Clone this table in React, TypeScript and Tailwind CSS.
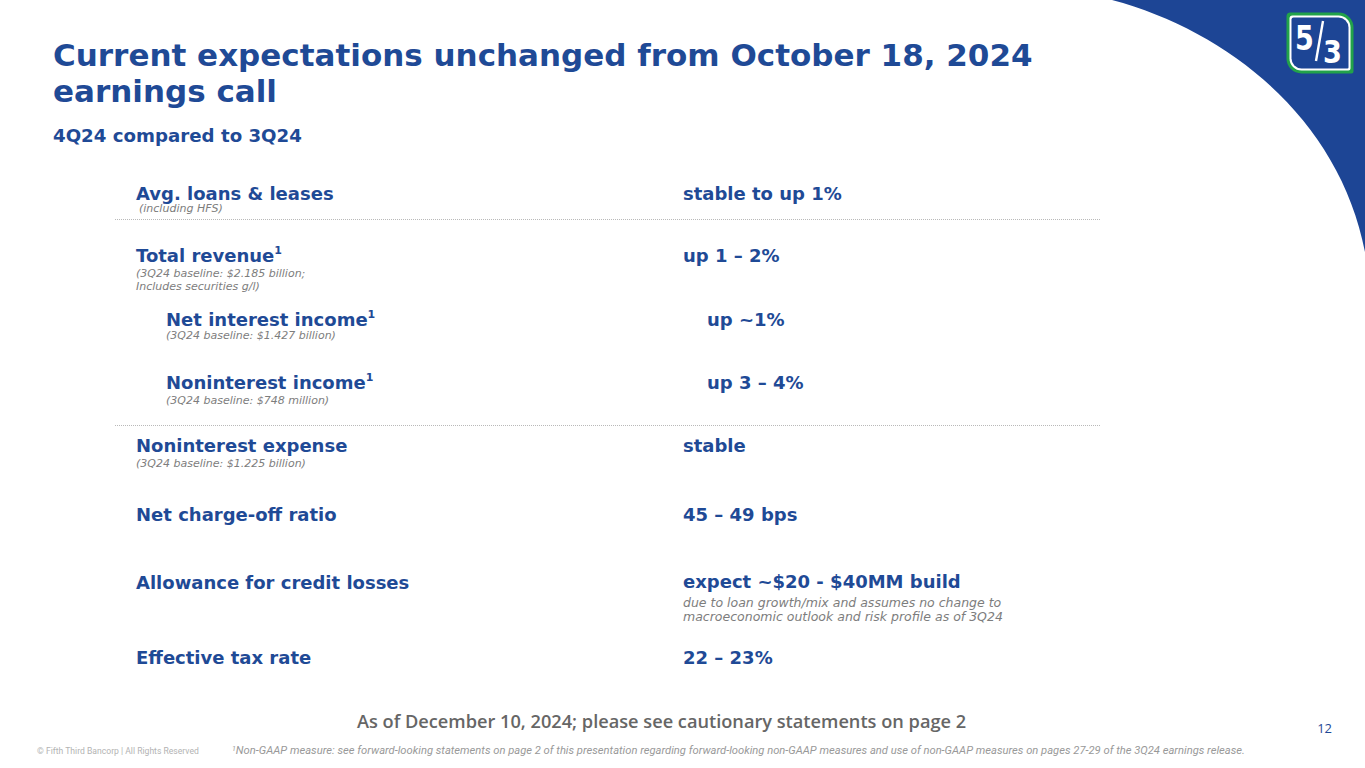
import React from "react";

const dv = "font-['DejaVu_Sans',sans-serif]";
const os = "font-['Open_Sans',sans-serif]";
const rb = "font-['Roboto',sans-serif]";

function Sup() {
  return <sup className="relative top-[-1px] text-[11px] align-super leading-none">1</sup>;
}

function Sub({ children, className = "" }: { children: React.ReactNode; className?: string }) {
  return (
    <div className={`${dv} font-normal italic text-[11px] leading-[13px] text-[#7d7d7d] ${className}`}>
      {children}
    </div>
  );
}

// rounded rect with separate corner radii
function rr(x: number, y: number, w: number, h: number, tl: number, tr: number, br: number, bl: number) {
  return `M${x + tl} ${y} H${x + w - tr} A${tr} ${tr} 0 0 1 ${x + w} ${y + tr} V${y + h - br} A${br} ${br} 0 0 1 ${
    x + w - br
  } ${y + h} H${x + bl} A${bl} ${bl} 0 0 1 ${x} ${y + h - bl} V${y + tl} A${tl} ${tl} 0 0 1 ${x + tl} ${y} Z`;
}

function Logo() {
  return (
    <svg width="68" height="62" viewBox="0 0 68 62" className="absolute left-[1286px] top-[12px]">
      <path d={rr(0.5, 0.5, 67, 61, 4, 15, 2, 15)} fill="#22a24a" />
      <path d={rr(3.5, 3.5, 61, 55, 3, 12, 2, 12)} fill="#ffffff" />
      <path d={rr(5.5, 5.5, 57, 51, 2, 10, 1, 10)} fill="#1d4595" />
      <text
        transform="translate(9 38) scale(0.82 1)"
        fill="#ffffff"
        fontFamily="DejaVu Sans, sans-serif"
        fontWeight="bold"
        fontSize="33"
      >
        5
      </text>
      <path d="M37 9 L30 49" stroke="#ffffff" strokeWidth="2.4" />
      <text
        transform="translate(37 51) scale(0.85 1)"
        fill="#ffffff"
        fontFamily="DejaVu Sans, sans-serif"
        fontWeight="bold"
        fontSize="32"
      >
        3
      </text>
    </svg>
  );
}

export default function App() {
  return (
    <div className="relative w-[1365px] h-[768px] overflow-hidden bg-white text-[#1f4a96]">
      <svg width="1365" height="768" className="absolute left-0 top-0 pointer-events-none">
        <path d="M1112 0 C1232 32 1340 122 1365 252 L1365 0 Z" fill="#1d4595" />
      </svg>
      <Logo />

      <div className="relative">
        <div className={`${dv} font-bold pt-[37px] pl-[53px]`}>
          <h1 className="text-[31px] leading-[36px]">
            Current expectations unchanged from October 18, 2024
            <br />
            earnings call
          </h1>
          <p className="text-[18.2px] leading-[22px] mt-[16px]">4Q24 compared to 3Q24</p>
        </div>

        <div className={`${dv} font-bold text-[18px] ml-[115px] w-[985px] mt-[37px]`}>
          {/* loans */}
          <div className="grid grid-cols-[568px_1fr]">
            <div className="pl-[21px]">
              <div className="leading-[20px]">Avg. loans &amp; leases</div>
              <Sub className="-mt-[2px] pl-[3px]">(including HFS)</Sub>
            </div>
            <div className="leading-[20px]">stable to up 1%</div>
          </div>
          <div className="mt-[4px] border-t border-dotted border-[#b9b9b9]" />

          {/* revenue */}
          <div className="grid grid-cols-[568px_1fr] mt-[26px]">
            <div className="pl-[21px]">
              <div className="leading-[20px]">
                Total revenue<Sup />
              </div>
              <Sub className="mt-[1px]">
                (3Q24 baseline: $2.185 billion;
                <br />
                Includes securities g/l)
              </Sub>
            </div>
            <div className="leading-[20px]">up 1 – 2%</div>
          </div>

          <div className="grid grid-cols-[568px_1fr] mt-[17px]">
            <div className="pl-[51px]">
              <div className="leading-[20px]">
                Net interest income<Sup />
              </div>
              <Sub className="-mt-[1px]">(3Q24 baseline: $1.427 billion)</Sub>
            </div>
            <div className="pl-[24px] leading-[20px]">up ~1%</div>
          </div>

          <div className="grid grid-cols-[568px_1fr] mt-[31px]">
            <div className="pl-[51px]">
              <div className="leading-[20px]">
                Noninterest income<Sup />
              </div>
              <Sub className="mt-[1px]">(3Q24 baseline: $748 million)</Sub>
            </div>
            <div className="pl-[24px] leading-[20px]">up 3 – 4%</div>
          </div>
          <div className="mt-[18px] border-t border-dotted border-[#b9b9b9]" />

          {/* expense */}
          <div className="grid grid-cols-[568px_1fr] mt-[10px]">
            <div className="pl-[21px]">
              <div className="leading-[20px]">Noninterest expense</div>
              <Sub className="mt-[1px]">(3Q24 baseline: $1.225 billion)</Sub>
            </div>
            <div className="leading-[20px]">stable</div>
          </div>

          <div className="grid grid-cols-[568px_1fr] mt-[35px]">
            <div className="pl-[21px] leading-[20px]">Net charge-off ratio</div>
            <div className="leading-[20px]">45 – 49 bps</div>
          </div>

          <div className="grid grid-cols-[568px_1fr] mt-[47px]">
            <div className="pl-[21px] leading-[20px] pt-[1px]">Allowance for credit losses</div>
            <div>
              <div className="leading-[20px]">expect ~$20 - $40MM build</div>
              <div className="font-normal italic text-[12.5px] leading-[14px] text-[#7d7d7d] mt-[4px]">
                due to loan growth/mix and assumes no change to
                <br />
                macroeconomic outlook and risk profile as of 3Q24
              </div>
            </div>
          </div>

          <div className="grid grid-cols-[568px_1fr] mt-[24px]">
            <div className="pl-[21px] leading-[20px]">Effective tax rate</div>
            <div className="leading-[20px]">22 – 23%</div>
          </div>
        </div>

        <div className="flex items-start mt-[42px]">
          <p className={`${os} font-semibold text-[18.2px] leading-[22px] text-[#666666] pl-[357px]`}>
            As of December 10, 2024; please see cautionary statements on page 2
          </p>
          <p className={`${os} text-[13px] leading-[14px] ml-auto pr-[33px] mt-[11px]`}>12</p>
        </div>
        <div className="flex items-center mt-[9px]">
          <p className={`${rb} text-[8.6px] leading-[12px] text-[#b3b3b3] pl-[37px] w-[232px]`}>
            © Fifth Third Bancorp | All Rights Reserved
          </p>
          <p className={`${rb} italic text-[11.2px] leading-[14px] text-[#999999]`}>
            <sup className="text-[7px]">1</sup>Non-GAAP measure: see forward-looking statements on page 2 of this
            presentation regarding forward-looking non-GAAP measures and use of non-GAAP measures on pages 27-29 of the
            3Q24 earnings release.
          </p>
        </div>
      </div>
    </div>
  );
}
